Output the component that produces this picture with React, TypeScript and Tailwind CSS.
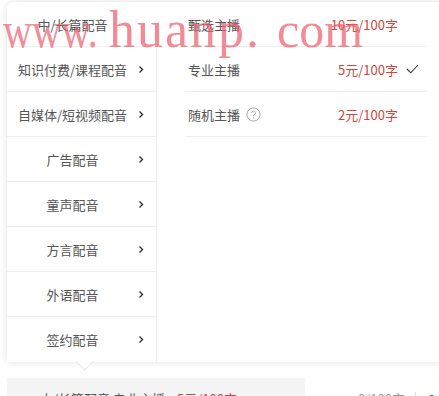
import React from 'react';

const categories = [
  '中/长篇配音',
  '知识付费/课程配音',
  '自媒体/短视频配音',
  '广告配音',
  '童声配音',
  '方言配音',
  '外语配音',
  '签约配音',
];

const anchors = [
  { name: '甄选主播', price: '10元/100字', checked: false, help: false },
  { name: '专业主播', price: '5元/100字', checked: true, help: false },
  { name: '随机主播', price: '2元/100字', checked: false, help: true },
];

function Chevron() {
  return (
    <svg width="6" height="9" viewBox="0 0 6 9" className="shrink-0">
      <path d="M1.5 1.5l3 3-3 3" fill="none" stroke="#333" strokeWidth="1.4" />
    </svg>
  );
}

function Check() {
  return (
    <svg width="13" height="10" viewBox="0 0 13 10">
      <path d="M1 5l3.8 3.8L12 1" fill="none" stroke="#333" strokeWidth="1.1" />
    </svg>
  );
}

function HelpIcon() {
  return (
    <svg width="15" height="15" viewBox="0 0 15 15" className="ml-[6px]">
      <circle cx="7.5" cy="7.5" r="6.6" fill="none" stroke="#aaa" strokeWidth="1" />
      <path d="M5.6 5.9a1.9 1.9 0 1 1 2.6 1.8c-.5.2-.7.6-.7 1.1v.6" fill="none" stroke="#aaa" strokeWidth="1" />
      <circle cx="7.5" cy="10.9" r="0.7" fill="#aaa" />
    </svg>
  );
}

export default function App() {
  return (
    <div className="relative w-[439px] h-[396px] overflow-hidden bg-white text-[13px] text-[#555] font-['Noto_Sans_CJK_SC','Noto_Sans',sans-serif]">
      <div className="pl-[7px] pt-[2px]">
        <div className="relative flex w-[446px] h-[360px] bg-white rounded-tl-[6px] shadow-[0_0_8px_rgba(0,0,0,0.12)]">
          {/* category list */}
          <div className="w-[150px] shrink-0">
            {categories.map((c, i) => (
              <div
                key={c}
                className={`flex items-center h-[45px] ${i < categories.length - 1 ? 'border-b border-[#eeeeee]' : ''} ${i > 0 ? 'border-r border-[#eeeeee]' : ''}`}
              >
                <span className="w-[131px] text-center leading-none">{c}</span>
                {i > 0 && <Chevron />}
              </div>
            ))}
          </div>

          {/* anchor list */}
          <div className="flex-1 pl-[28px] pr-[26px]">
            {anchors.map(a => (
              <div key={a.name} className="flex items-center h-[45px] border-b border-[#eeeeee] pl-[3px]">
                <span className="leading-none">{a.name}</span>
                {a.help && <HelpIcon />}
                <span className="flex-1" />
                <span className="text-[#c9483c] leading-none">{a.price}</span>
                <span className="w-[29px] flex justify-center">{a.checked && <Check />}</span>
              </div>
            ))}
          </div>

          {/* caret under the popover */}
          <div className="absolute left-[71px] bottom-[-6px] w-[13px] h-[13px] rotate-45 bg-white border-r border-b border-[#e6e6e6]" />
        </div>
      </div>

      {/* selected summary bar */}
      <div className="flex items-start mt-[16px]">
        <div className="ml-[7px] w-[298px] h-[30px] bg-[#f4f4f4] pt-[14px] pl-[33px] flex leading-[13px] whitespace-nowrap">
          <span>中/长篇配音 专业主播</span>
          <span className="ml-[12px] text-[#c9483c]">5元/100字</span>
          <span className="ml-[24px] text-[#999]">⌄</span>
        </div>
        <div className="flex items-start pt-[14px] leading-[13px] text-[#666] whitespace-nowrap">
          <span className="ml-[35px]">›</span>
          <span className="ml-[14px] text-[#999]">0/100字</span>
          <span className="ml-[10px] w-px h-[14px] bg-[#ddd]" />
          <span className="ml-[12px] text-[#333]">✎</span>
        </div>
      </div>

      {/* watermark */}
      <div className="pointer-events-none absolute inset-0 font-['Liberation_Serif',serif] text-[#ec5a6a]/70 leading-none">
        <span className="absolute left-[3px] top-[5px] text-[51px] scale-x-[0.79] origin-left">www.</span>
        <span className="absolute left-[109px] top-[4px] text-[52px] tracking-[2px]">huanp.</span>
        <span className="absolute left-[277px] top-[5px] text-[50px]">com</span>
      </div>
    </div>
  );
}
